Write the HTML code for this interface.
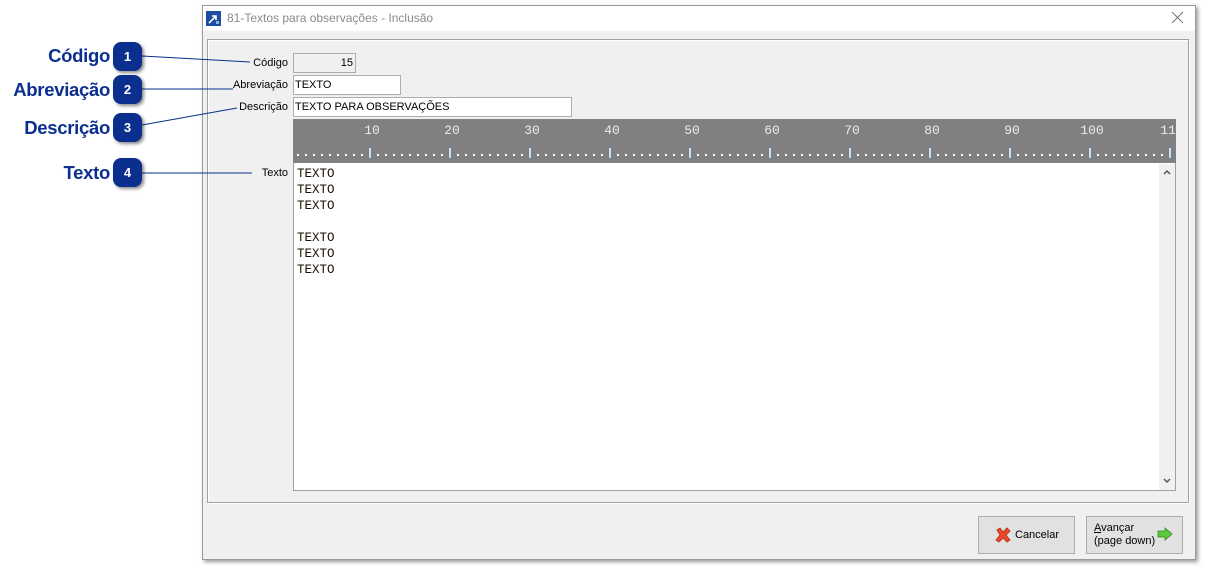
<!DOCTYPE html>
<html><head><meta charset="utf-8"><style>
*{margin:0;padding:0;box-sizing:border-box}
body{width:1207px;height:571px;background:#fff;position:relative;overflow:hidden;font-family:"Liberation Sans",sans-serif;font-size:11px;color:#000}
.a{position:absolute}
.lbl{position:absolute;text-align:right;font-size:11px}
.big{position:absolute;font-weight:bold;color:#0b2f8f;font-size:18.5px;text-align:right;width:110px;left:0;letter-spacing:-0.3px}
.bad{position:absolute;left:113px;width:29px;height:29px;border-radius:8px;background:#0b2f8f;color:#fff;font-weight:bold;font-size:13px;text-align:center;line-height:29px;box-shadow:2px 2px 3px rgba(0,0,0,.45)}
.inp{position:absolute;background:#fff;border:1px solid #adadad;font-size:11px;padding-left:1px;line-height:18px}
.mono{font-family:"Liberation Mono",monospace;font-size:12.5px;line-height:16px;color:#1a1000}
.btn{position:absolute;background:#e1e1e1;border:1px solid #adadad;font-size:11px}
</style></head><body>
<div class="a" style="left:202px;top:5px;width:994px;height:555px;background:#f0f0f0;border:1px solid #9a9a9a;box-shadow:2px 2px 4px rgba(0,0,0,.4)"></div>
<div class="a" style="left:203px;top:6px;width:992px;height:25px;background:#fff"></div>
<svg class="a" style="left:206px;top:11px" width="15" height="15"><rect width="15" height="15" fill="#1c4da1"/><path d="M3 12 L10 5 M6 5 H10 V9" stroke="#fff" stroke-width="1.6" fill="none"/><rect x="10" y="10" width="3" height="3" fill="#8fb0e0"/></svg>
<div class="a" style="left:227px;top:11px;color:#8a8a8a;font-size:12px">81-Textos para observações - Inclusão</div>
<svg class="a" style="left:1171px;top:11px" width="13" height="13"><path d="M1 1L12 12M12 1L1 12" stroke="#777" stroke-width="1"/></svg>
<div class="a" style="left:207px;top:39px;width:982px;height:464px;border:1px solid #a0a0a0;box-shadow:inset 1px 1px 0 #fff,1px 1px 0 #fff"></div>
<div class="lbl" style="left:200px;width:88px;top:57px">Código</div>
<div class="inp" style="left:293px;top:53px;width:63px;height:20px;background:#f0f0f0;text-align:right;padding-right:2px">15</div>
<div class="lbl" style="left:200px;width:88px;top:79px">Abreviação</div>
<div class="inp" style="left:293px;top:75px;width:108px;height:20px">TEXTO</div>
<div class="lbl" style="left:200px;width:88px;top:101px">Descrição</div>
<div class="inp" style="left:293px;top:97px;width:279px;height:20px">TEXTO PARA OBSERVAÇÕES</div>
<div class="lbl" style="left:200px;width:88px;top:167px">Texto</div>
<svg class="a" style="left:293px;top:119px" width="883" height="44">
<rect width="883" height="44" fill="#808080"/>
<g font-family="Liberation Mono,monospace" font-size="13" fill="#ececec" text-anchor="middle">
<text x="79" y="15">10</text><text x="159" y="15">20</text><text x="239" y="15">30</text><text x="319" y="15">40</text><text x="399" y="15">50</text><text x="479" y="15">60</text><text x="559" y="15">70</text><text x="639" y="15">80</text><text x="719" y="15">90</text><text x="799" y="15">100</text><text x="879" y="15">110</text>
</g>
<g fill="none" stroke="#fff" stroke-width="2" stroke-dasharray="2 6">
<line x1="4" y1="36" x2="883" y2="36"/>
</g>
<g fill="#c4e0f8">
<rect x="76" y="29" width="2" height="10"/><rect x="156" y="29" width="2" height="10"/><rect x="236" y="29" width="2" height="10"/><rect x="316" y="29" width="2" height="10"/><rect x="396" y="29" width="2" height="10"/><rect x="476" y="29" width="2" height="10"/><rect x="556" y="29" width="2" height="10"/><rect x="636" y="29" width="2" height="10"/><rect x="716" y="29" width="2" height="10"/><rect x="796" y="29" width="2" height="10"/><rect x="876" y="29" width="2" height="10"/>
</g>
</svg>
<div class="a" style="left:293px;top:163px;width:883px;height:328px;background:#fff;border:1px solid #a0a0a0;border-top:none"></div>
<div class="a" style="left:1159px;top:164px;width:16px;height:326px;background:#f0f0f0"></div>
<svg class="a" style="left:1161px;top:167px" width="12" height="10"><path d="M3 7L6 4L9 7" stroke="#555" stroke-width="1.5" fill="none"/></svg>
<svg class="a" style="left:1161px;top:476px" width="12" height="10"><path d="M3 3L6 6L9 3" stroke="#555" stroke-width="1.5" fill="none"/></svg>
<div class="a mono" style="left:297px;top:166px">TEXTO<br>TEXTO<br>TEXTO<br><br>TEXTO<br>TEXTO<br>TEXTO</div>
<div class="btn" style="left:978px;top:516px;width:97px;height:38px"></div>
<svg class="a" style="left:994px;top:526px" width="18" height="18"><path d="M3 4L6 2L9 6L13 2L16 5L12 9L16 14L13 16L9 12L5 16L2 14L6 9Z" fill="#e84a2a" stroke="#b52a10" stroke-width="0.8"/></svg>
<div class="a" style="left:1015px;top:529px;font-size:11px">Cancelar</div>
<div class="btn" style="left:1086px;top:516px;width:97px;height:38px"></div>
<div class="a" style="left:1094px;top:522px;font-size:11px;line-height:13px"><u>A</u>vançar<br>(page down)</div>
<svg class="a" style="left:1157px;top:527px" width="16" height="14"><path d="M1 4H8V1L15 7L8 13V10H1Z" fill="#5cc83c" stroke="#2e8a1a" stroke-width="0.8"/></svg>
<svg class="a" style="left:0;top:0" width="300" height="200">
<g stroke="#0b2f8f" stroke-width="1" fill="none">
<line x1="142" y1="56" x2="250" y2="62"/>
<line x1="142" y1="89" x2="233" y2="89"/>
<line x1="142" y1="125" x2="237" y2="108"/>
<line x1="142" y1="173" x2="252" y2="173"/>
</g></svg>
<div class="big" style="top:45px">Código</div><div class="bad" style="top:42px">1</div>
<div class="big" style="top:79px">Abreviação</div><div class="bad" style="top:75px">2</div>
<div class="big" style="top:117px">Descrição</div><div class="bad" style="top:113px">3</div>
<div class="big" style="top:162px">Texto</div><div class="bad" style="top:158px">4</div>
</body></html>
